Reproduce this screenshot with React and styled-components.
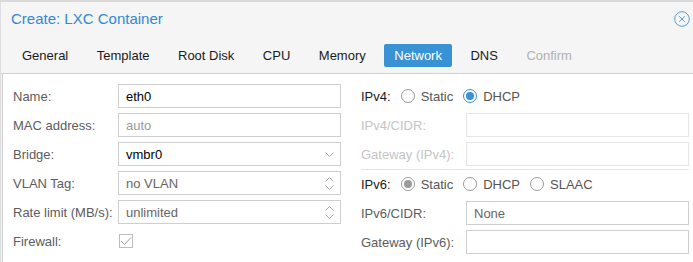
import React from "react";
import styled, { createGlobalStyle } from "styled-components";

const Global = createGlobalStyle`
  html, body { margin: 0; padding: 0; background: #f5f5f5; }
  body { font-family: "Liberation Sans", Arial, sans-serif; font-size: 13px; }
  * { box-sizing: border-box; }
`;

const Window = styled.div`
  width: 693px;
  height: 262px;
  overflow: hidden;
  background: #f5f5f5;
  border-top: 2px solid #d9d9d9;
  border-left: 1px solid #dedede;
  display: flex;
  flex-direction: column;
`;

const Header = styled.div`
  height: 32px;
  display: flex;
  align-items: center;
  justify-content: space-between;
  padding: 0 3px 0 10px;
`;

const Title = styled.div`
  color: #3089d4;
  font-size: 15px;
`;

const CloseBtn = styled.div`
  width: 16px;
  height: 16px;
  display: flex;
  margin-top: 2px;
`;

const TabBar = styled.div`
  display: flex;
  gap: 8.5px;
  padding: 10px 0 6px 11px;
  border-bottom: 1px solid #cfcfcf;
`;

const Tab = styled.div`
  height: 23px;
  padding: 0 10px;
  display: flex;
  align-items: center;
  border-radius: 2px;
  color: ${(p) => (p.$active ? "#fff" : p.$disabled ? "#b0b0b0" : "#1a1a1a")};
  background: ${(p) => (p.$active ? "#3892d4" : "transparent")};
`;

const Body = styled.div`
  flex: 1;
  margin-left: 1px;
  background: #fff;
  border-left: 1px solid #d0d0d0;
  padding: 10px 0 0 10px;
  display: grid;
  grid-template-columns: 328px 328px;
  column-gap: 20px;
  align-content: start;
`;

const Column = styled.div`
  display: flex;
  flex-direction: column;
`;

const Row = styled.div`
  display: flex;
  align-items: center;
  height: 24px;
  margin-bottom: ${(p) => (p.$mb != null ? p.$mb : 5)}px;
`;

const Label = styled.div`
  width: 105px;
  flex: none;
  color: ${(p) => (p.$disabled ? "#c4c4c4" : "#5c5c5c")};
  white-space: nowrap;
`;

const PlainLabel = styled.div`
  color: #1a1a1a;
  margin-right: 10px;
`;

const Field = styled.div`
  flex: 1;
  height: 24px;
  border: 1px solid ${(p) => (p.$disabled ? "#e6e6e6" : "#cfcfcf")};
  background: #fff;
  display: flex;
  align-items: center;
  padding-left: 7px;
  color: ${(p) => p.$color || "#000"};
`;

const FieldText = styled.span`
  flex: 1;
`;

const Trigger = styled.div`
  width: 22px;
  height: 22px;
  display: flex;
  flex-direction: column;
  align-items: center;
  justify-content: center;
  gap: 3px;
`;

const Sep = styled.div`
  height: 1px;
  background: #e4e4e4;
  margin-bottom: 2px;
`;

const RadioItem = styled.div`
  display: flex;
  align-items: center;
  margin-right: 10px;
  color: #555;
`;

const RadioCircle = styled.span`
  width: 14px;
  height: 14px;
  border-radius: 50%;
  border: 1px solid ${(p) => (p.$checked ? p.$c : "#9a9a9a")};
  display: flex;
  align-items: center;
  justify-content: center;
  margin-right: 6px;
  &::after {
    content: "";
    width: 8px;
    height: 8px;
    border-radius: 50%;
    background: ${(p) => (p.$checked ? p.$c : "transparent")};
  }
`;

const CheckBox = styled.div`
  width: 14px;
  height: 14px;
  margin-left: 1px;
  border: 1px solid #bdbdbd;
  display: flex;
  align-items: center;
  justify-content: center;
`;

const Chevron = ({ up }) => (
  <svg width="9" height="5" viewBox="0 0 9 5">
    <path
      d={up ? "M0.5 4.5 L4.5 0.5 L8.5 4.5" : "M0.5 0.5 L4.5 4.5 L8.5 0.5"}
      fill="none"
      stroke="#a8a8a8"
      strokeWidth="1"
    />
  </svg>
);

const Radio = ({ checked, color = "#3892d4", children }) => (
  <RadioItem>
    <RadioCircle $checked={checked} $c={color} />
    {children}
  </RadioItem>
);

const tabs = ["General", "Template", "Root Disk", "CPU", "Memory", "Network", "DNS", "Confirm"];

export default function App() {
  return (
    <>
      <Global />
      <Window>
        <Header>
          <Title>Create: LXC Container</Title>
          <CloseBtn>
            <svg width="16" height="16" viewBox="0 0 16 16">
              <circle cx="8" cy="8" r="7.3" fill="none" stroke="#5a9fd8" strokeWidth="1" />
              <path d="M5.2 5.2 L10.8 10.8 M10.8 5.2 L5.2 10.8" stroke="#5a9fd8" strokeWidth="1" />
            </svg>
          </CloseBtn>
        </Header>
        <TabBar>
          {tabs.map((t) => (
            <Tab key={t} $active={t === "Network"} $disabled={t === "Confirm"}>
              {t}
            </Tab>
          ))}
        </TabBar>
        <Body>
          <Column>
            <Row>
              <Label>Name:</Label>
              <Field>eth0</Field>
            </Row>
            <Row>
              <Label>MAC address:</Label>
              <Field $color="#9a9a9a">auto</Field>
            </Row>
            <Row>
              <Label>Bridge:</Label>
              <Field>
                <FieldText>vmbr0</FieldText>
                <Trigger>
                  <Chevron />
                </Trigger>
              </Field>
            </Row>
            <Row>
              <Label>VLAN Tag:</Label>
              <Field $color="#666">
                <FieldText>no VLAN</FieldText>
                <Trigger>
                  <Chevron up />
                  <Chevron />
                </Trigger>
              </Field>
            </Row>
            <Row>
              <Label>Rate limit (MB/s):</Label>
              <Field $color="#666">
                <FieldText>unlimited</FieldText>
                <Trigger>
                  <Chevron up />
                  <Chevron />
                </Trigger>
              </Field>
            </Row>
            <Row>
              <Label>Firewall:</Label>
              <CheckBox>
                <svg width="12" height="10" viewBox="0 0 12 10">
                  <path d="M1 5 L4.5 8.5 L11 1.5" fill="none" stroke="#9a9a9a" strokeWidth="1" />
                </svg>
              </CheckBox>
            </Row>
          </Column>
          <Column>
            <Row>
              <PlainLabel>IPv4:</PlainLabel>
              <Radio>Static</Radio>
              <Radio checked>DHCP</Radio>
            </Row>
            <Row>
              <Label $disabled>IPv4/CIDR:</Label>
              <Field $disabled />
            </Row>
            <Row $mb={3}>
              <Label $disabled>Gateway (IPv4):</Label>
              <Field $disabled />
            </Row>
            <Sep />
            <Row>
              <PlainLabel>IPv6:</PlainLabel>
              <Radio checked color="#9a9a9a">Static</Radio>
              <Radio>DHCP</Radio>
              <Radio>SLAAC</Radio>
            </Row>
            <Row>
              <Label>IPv6/CIDR:</Label>
              <Field $color="#666">None</Field>
            </Row>
            <Row>
              <Label>Gateway (IPv6):</Label>
              <Field />
            </Row>
          </Column>
        </Body>
      </Window>
    </>
  );
}
